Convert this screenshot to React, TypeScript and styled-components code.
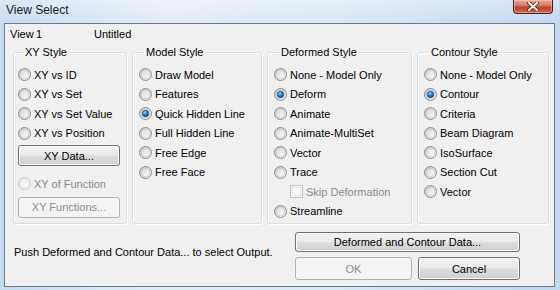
import React from 'react';
import styled, { createGlobalStyle } from 'styled-components';

const Global = createGlobalStyle`
  html, body { margin: 0; padding: 0; background: #fff; }
  body {
    font-family: "Liberation Sans", Arial, sans-serif;
    font-size: 11px;
    color: #000;
  }
  * { box-sizing: border-box; }
`;

const Window = styled.div`
  width: 559px;
  height: 290px;
  display: flex;
  flex-direction: column;
  padding: 0 4px 3px 4px;
  background:
    linear-gradient(180deg, rgba(255,255,255,0.35) 0px, rgba(255,255,255,0) 23px),
    linear-gradient(90deg, #c9dbef 0%, #e2ecf7 30%, #d9e6f4 60%, #c3d7ee 100%);
`;

const TitleBar = styled.div`
  height: 23px;
  display: flex;
  align-items: flex-start;
  justify-content: space-between;
`;

const Title = styled.div`
  padding: 2px 0 0 2px;
  line-height: 16px;
  font-size: 12px;
  color: #1b1b1b;
`;

const CloseBtn = styled.div`
  width: 40px;
  height: 14px;
  margin-right: 2px;
  border: 1px solid #4b1f17;
  border-top: none;
  border-radius: 0 0 4px 4px;
  background: linear-gradient(180deg, #e6a796 0%, #d67e68 40%, #c1442b 55%, #cf654c 100%);
  box-shadow: inset 0 0 0 1px rgba(255, 220, 210, 0.45);
  display: flex;
  align-items: center;
  justify-content: center;
`;

const Client = styled.div`
  flex: 1;
  display: flex;
  flex-direction: column;
  border: 1px solid #6a7a8c;
  background: #f0f0f0;
`;

const Header = styled.div`
  height: 20px;
  display: grid;
  grid-template-columns: 26px 58px auto;
  align-items: center;
  padding-left: 5px;
  line-height: 16px;
`;

const Groups = styled.div`
  display: grid;
  grid-template-columns: 114px 130px 145px 132px;
  column-gap: 5px;
  height: 180px;
  padding-left: 8px;
`;

const Group = styled.fieldset<{ $pad: number }>`
  margin: 0;
  min-width: 0;
  padding: 5px 0 0 ${(p) => p.$pad}px;
  border: 1px solid #d5dfe5;
  border-radius: 3px;
  box-shadow: inset 1px 1px 0 #fff, 1px 1px 0 #fff;
  display: flex;
  flex-direction: column;
`;

const Legend = styled.legend`
  padding: 0 2px;
  margin-left: 5px;
  line-height: 16px;
  color: #000;
`;

const Row = styled.div<{ $disabled?: boolean; $indent?: number; $mt?: number }>`
  height: 19.5px;
  display: flex;
  align-items: center;
  gap: 3px;
  white-space: nowrap;
  padding-left: ${(p) => p.$indent ?? 0}px;
  margin-top: ${(p) => p.$mt ?? 0}px;
  color: ${(p) => (p.$disabled ? '#8a8a8a' : '#000')};
`;

const Button = styled.div<{ $w: number; $h: number; $disabled?: boolean; $mt?: number }>`
  width: ${(p) => p.$w}px;
  height: ${(p) => p.$h}px;
  margin-top: ${(p) => p.$mt ?? 0}px;
  display: flex;
  align-items: center;
  justify-content: center;
  border-radius: 3px;
  border: 1px solid ${(p) => (p.$disabled ? '#adb2b5' : '#707070')};
  background: ${(p) =>
    p.$disabled
      ? '#f4f4f4'
      : 'linear-gradient(180deg, #f2f2f2 0%, #ebebeb 48%, #dddddd 52%, #cfcfcf 100%)'};
  box-shadow: ${(p) => (p.$disabled ? 'none' : 'inset 0 0 0 1px #fbfbfb')};
  color: ${(p) => (p.$disabled ? '#8c8c8c' : '#000')};
  white-space: nowrap;
`;

const Bottom = styled.div`
  display: grid;
  grid-template-columns: 1fr 225px;
  padding: 8px 34px 0 9px;
`;

const Hint = styled.div`
  margin-top: 12px;
  line-height: 16px;
  white-space: nowrap;
`;

const ButtonStack = styled.div`
  display: flex;
  flex-direction: column;
  gap: 5px;
`;

const ButtonPair = styled.div`
  display: flex;
  gap: 6px;
`;

const Radio = ({ checked, disabled }: { checked?: boolean; disabled?: boolean }) => {
  const id = disabled ? 'd' : 'n';
  return (
    <svg width="13" height="13" viewBox="0 0 13 13" style={{ flex: 'none' }}>
      <defs>
        <linearGradient id={`ro${id}`} x1="0" y1="0" x2="1" y2="1">
          <stop offset="0" stopColor={disabled ? '#e4e4e4' : '#c9c9c9'} />
          <stop offset="1" stopColor={disabled ? '#f8f8f8' : '#f7f7f7'} />
        </linearGradient>
        <linearGradient id={`ri${id}`} x1="0" y1="0" x2="1" y2="1">
          <stop offset="0" stopColor={disabled ? '#ececec' : '#d8d8d8'} />
          <stop offset="1" stopColor={disabled ? '#fbfbfb' : '#fdfdfd'} />
        </linearGradient>
        <radialGradient id="rc" cx="0.4" cy="0.35" r="0.7">
          <stop offset="0" stopColor="#9fd6ff" />
          <stop offset="0.45" stopColor="#2a8ad4" />
          <stop offset="1" stopColor="#0b3f75" />
        </radialGradient>
      </defs>
      <circle cx="6.5" cy="6.5" r="6" fill={`url(#ro${id})`} stroke={disabled ? '#c6c6c6' : '#8d8d8d'} strokeWidth="1" />
      <circle cx="6.5" cy="6.5" r="4.3" fill={`url(#ri${id})`} stroke={disabled ? '#e2e2e2' : '#bdbdbd'} strokeWidth="0.6" />
      {checked && <circle cx="6.5" cy="6.5" r="3.2" fill="url(#rc)" stroke="#143f6a" strokeWidth="0.6" />}
    </svg>
  );
};

const CheckBox = ({ disabled }: { disabled?: boolean }) => (
  <svg width="13" height="13" viewBox="0 0 13 13" style={{ flex: 'none' }}>
    <rect x="0.5" y="0.5" width="12" height="12" fill="#f4f4f4" stroke={disabled ? '#c2c2c2' : '#8e8f8f'} />
    <rect x="2.5" y="2.5" width="8" height="8" fill="#f6f6f6" stroke="#e6e6e6" />
  </svg>
);

const CloseGlyph = () => (
  <svg width="12" height="9" viewBox="0 0 12 9">
    <path d="M2 1 L10 8 M10 1 L2 8" stroke="#5a2418" strokeWidth="3.6" strokeLinecap="square" fill="none" />
    <path d="M2 1 L10 8 M10 1 L2 8" stroke="#ffffff" strokeWidth="2" strokeLinecap="square" fill="none" />
  </svg>
);

type Item = { label: string; checked?: boolean };

const RadioRow = ({ label, checked, disabled, mt }: Item & { disabled?: boolean; mt?: number }) => (
  <Row $disabled={disabled} $mt={mt}>
    <Radio checked={checked} disabled={disabled} />
    <span>{label}</span>
  </Row>
);

const modelItems: Item[] = [
  { label: 'Draw Model' },
  { label: 'Features' },
  { label: 'Quick Hidden Line', checked: true },
  { label: 'Full Hidden Line' },
  { label: 'Free Edge' },
  { label: 'Free Face' },
];

const deformItems: Item[] = [
  { label: 'None - Model Only' },
  { label: 'Deform', checked: true },
  { label: 'Animate' },
  { label: 'Animate-MultiSet' },
  { label: 'Vector' },
  { label: 'Trace' },
];

const contourItems: Item[] = [
  { label: 'None - Model Only' },
  { label: 'Contour', checked: true },
  { label: 'Criteria' },
  { label: 'Beam Diagram' },
  { label: 'IsoSurface' },
  { label: 'Section Cut' },
  { label: 'Vector' },
];

export default function App() {
  return (
    <>
      <Global />
      <Window>
        <TitleBar>
          <Title>View Select</Title>
          <CloseBtn>
            <CloseGlyph />
          </CloseBtn>
        </TitleBar>
        <Client>
          <Header>
            <span>View</span>
            <span>1</span>
            <span>Untitled</span>
          </Header>
          <Groups>
            <Group $pad={4}>
              <Legend>XY Style</Legend>
              <RadioRow label="XY vs ID" />
              <RadioRow label="XY vs Set" />
              <RadioRow label="XY vs Set Value" />
              <RadioRow label="XY vs Position" />
              <Button $w={102} $h={21} $mt={2}>XY Data...</Button>
              <RadioRow label="XY of Function" disabled mt={8} />
              <Button $w={102} $h={21} $mt={3} $disabled>XY Functions...</Button>
            </Group>
            <Group $pad={6}>
              <Legend>Model Style</Legend>
              {modelItems.map((it) => (
                <RadioRow key={it.label} {...it} />
              ))}
            </Group>
            <Group $pad={6}>
              <Legend>Deformed Style</Legend>
              {deformItems.map((it) => (
                <RadioRow key={it.label} {...it} />
              ))}
              <Row $disabled $indent={16}>
                <CheckBox disabled />
                <span>Skip Deformation</span>
              </Row>
              <RadioRow label="Streamline" />
            </Group>
            <Group $pad={6}>
              <Legend>Contour Style</Legend>
              {contourItems.map((it) => (
                <RadioRow key={it.label} {...it} />
              ))}
            </Group>
          </Groups>
          <Bottom>
            <Hint>Push Deformed and Contour Data... to select Output.</Hint>
            <ButtonStack>
              <Button $w={225} $h={20}>Deformed and Contour Data...</Button>
              <ButtonPair>
                <Button $w={117} $h={23} $disabled>OK</Button>
                <Button $w={102} $h={23}>Cancel</Button>
              </ButtonPair>
            </ButtonStack>
          </Bottom>
        </Client>
      </Window>
    </>
  );
}
